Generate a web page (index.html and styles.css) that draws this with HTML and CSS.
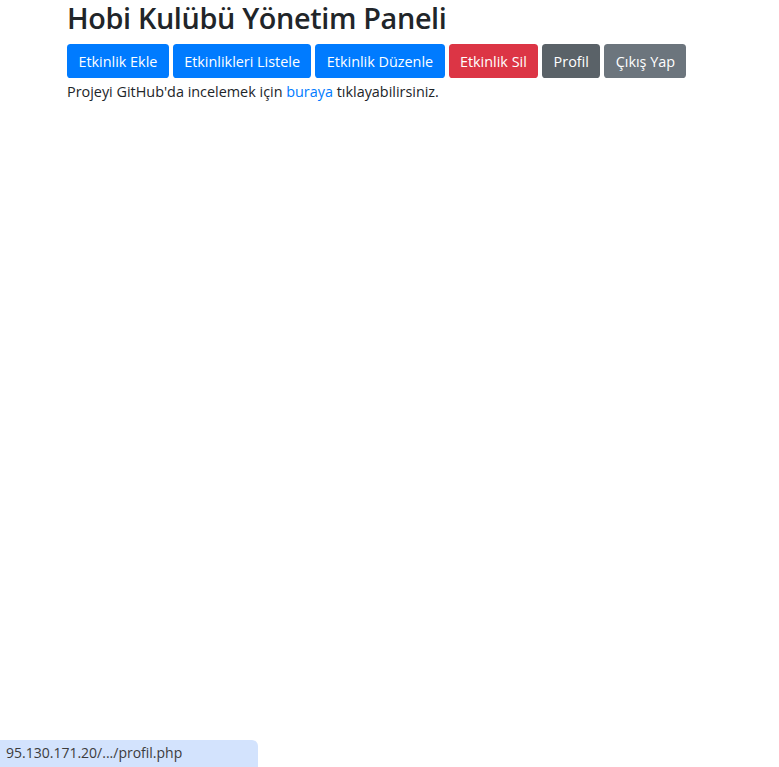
FILE: index.html
```html
<!DOCTYPE html>
<html lang="tr">
<head>
<meta charset="utf-8">
<title>Hobi Kulübü Yönetim Paneli</title>
<link rel="stylesheet" href="styles.css">
</head>
<body>
<div class="container">
  <h2 class="title">Hobi Kulübü Yönetim Paneli</h2>
  <div class="actions">
    <a class="btn btn-primary" href="#">Etkinlik Ekle</a>
    <a class="btn btn-primary" href="#">Etkinlikleri Listele</a>
    <a class="btn btn-primary" href="#">Etkinlik Düzenle</a>
    <a class="btn btn-danger" href="#">Etkinlik Sil</a>
    <a class="btn btn-secondary-hover" href="#">Profil</a>
    <a class="btn btn-secondary" href="#">Çıkış Yap</a>
  </div>
  <p class="note">Projeyi GitHub'da incelemek için <a class="link" href="#">buraya</a> tıklayabilirsiniz.</p>
</div>
<div class="status">95.130.171.20/.../profil.php</div>
</body>
</html>
```
FILE: styles.css
```css
html, body {
  margin: 0;
  padding: 0;
  background: #fff;
}
body {
  font-family: "Open Sans", "Noto Sans", "Liberation Sans", sans-serif;
  color: #212529;
  font-size: 14.4px;
  line-height: 1.5;
  height: 767px;
  overflow: hidden;
  position: relative;
}
.container {
  padding-left: 67px;
}
.title {
  margin: 0 0 8px 0;
  font-size: 28.8px;
  font-weight: 600;
  line-height: 36px;
  padding: 0;
  letter-spacing: -0.35px;
}
.actions {
  display: flex;
  gap: 4px;
}
.btn {
  display: inline-block;
  height: 34px;
  box-sizing: border-box;
  padding: 6.6px 11.4px 4.2px;
  border-radius: 3.6px;
  color: #fff;
  text-decoration: none;
  font-size: 14.4px;
  line-height: 1.5;
}
.btn-primary { background: #007bff; }
.btn-danger { background: #dc3545; }
.btn-secondary-hover { background: #5a6268; }
.btn-secondary { background: #6c757d; }
.note {
  margin: 3px 0 0 0;
}
.link {
  color: #007bff;
  text-decoration: none;
}
.status {
  position: absolute;
  left: 0;
  bottom: 0;
  width: 258px;
  height: 27px;
  box-sizing: border-box;
  background: #d3e3fd;
  border-top-right-radius: 6px;
  padding: 4px 0 0 6px;
  font-size: 14px;
  line-height: 18px;
  color: #3c3c3c;
}
```
